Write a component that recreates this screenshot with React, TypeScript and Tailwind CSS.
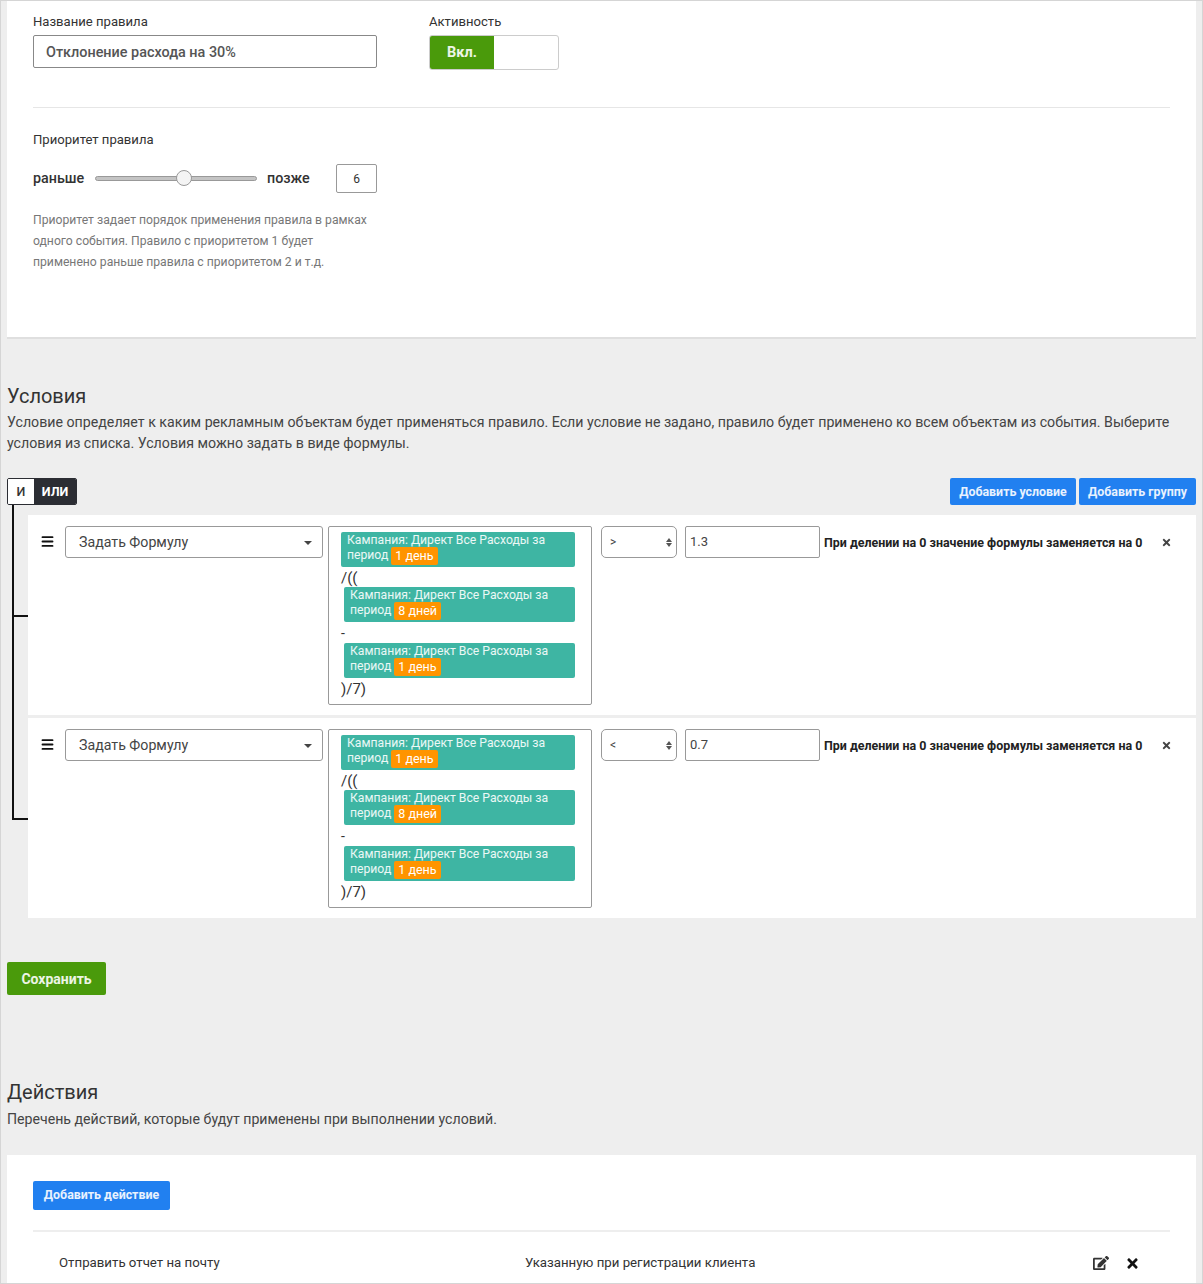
import { Menu } from "lucide-react";
import { FaEdit, FaTimes } from "react-icons/fa";

function Chip({ days, inset }: { days: string; inset?: boolean }) {
  return (
    <div className={`${inset ? "ml-[15px]" : "ml-[12px]"} mr-[16px] h-[35px] rounded-[2px] bg-[#3eb5a3] pl-[6px] pt-[1px] text-[12.2px] leading-[15px] text-white/90`}>
      <div className="h-[14px]">Кампания: Директ Все Расходы за</div>
      <div className="flex h-[18px] items-center">
        <span className="pb-[2px]">период</span>
        <span className="ml-[3px] flex h-[18px] items-center rounded-[2px] bg-[#ff9400] px-[4px] pb-[1px] text-[12.5px] text-white">{days}</span>
      </div>
    </div>
  );
}

function ConditionRow({ op, value }: { op: string; value: string }) {
  return (
    <div className="flex h-[200px] items-start bg-white pl-[12px] pt-[11px]">
      <Menu className="mt-[8px] mr-[10px] h-[15px] w-[15px] text-[#111]" strokeWidth={3} />
      <div className="flex h-[32px] w-[258px] items-center justify-between rounded-[3px] border border-[#999] pl-[13px] pr-[10px] pt-[1px] text-[14.2px] text-[#444]">
        Задать Формулу
        <span className="h-0 w-0 border-x-[4px] border-t-[4px] border-x-transparent border-t-[#444]" />
      </div>
      <div className="ml-[5px] h-[179px] w-[264px] rounded-[2px] border border-[#999] pt-[5px] text-[#333]">
        <Chip days="1 день" />
        <div className="ml-[12px] h-[20px] pt-[1px] text-[15px] leading-[20px]">/((</div>
        <Chip days="8 дней" inset />
        <div className="ml-[12px] h-[21px] pt-[1px] text-[14px] leading-[21px]">-</div>
        <Chip days="1 день" inset />
        <div className="ml-[12px] pt-[1px] text-[15px] leading-[20px]">)/7)</div>
      </div>
      <div className="ml-[9px] flex h-[32px] w-[76px] items-center justify-between rounded-[5px] border border-[#999] pl-[8px] pr-[4px] text-[12px] text-[#444]">
        {op}
        <span className="flex flex-col gap-[1px]">
          <span className="h-0 w-0 border-x-[3px] border-b-[4px] border-x-transparent border-b-[#555]" />
          <span className="h-0 w-0 border-x-[3px] border-t-[4px] border-x-transparent border-t-[#555]" />
        </span>
      </div>
      <div className="ml-[8px] flex h-[32px] w-[135px] items-center rounded-[2px] border border-[#999] pl-[4px] text-[13px] text-[#444]">{value}</div>
      <div className="ml-[4px] mt-[9px] w-[337px] text-[12.45px] leading-[16px] font-bold whitespace-nowrap text-[#222]">При делении на 0 значение формулы заменяется на 0</div>
      <FaTimes className="mt-[11px] h-[11px] w-[11px] text-[#444]" />
    </div>
  );
}

export default function App() {
  return (
    <div className="h-[1284px] w-[1203px] overflow-hidden border border-[#d5d5d5] bg-[#eeeeee] px-[6px] font-['Roboto',sans-serif]">
      {/* rule settings */}
      <div className="h-[338px] border-b-2 border-[#dfdfdf] bg-white px-[26px] pt-[13px]">
        <div className="flex">
          <div className="w-[344px]">
            <div className="h-[21px] text-[13.1px] leading-[15px] text-[#333]">Название правила</div>
            <div className="flex h-[33px] items-center rounded-[2px] border border-[#888] pl-[12px] pt-[2px] text-[14.4px] font-medium text-[#555]">Отклонение расхода на 30%</div>
          </div>
          <div className="ml-[52px]">
            <div className="h-[21px] text-[13.1px] leading-[15px] text-[#333]">Активность</div>
            <div className="flex h-[35px] w-[130px] overflow-hidden rounded-[3px] border border-[#ccc]">
              <div className="flex w-[64px] items-center justify-center bg-[#4a9a0b] text-[14.5px] font-bold text-white/90">Вкл.</div>
            </div>
          </div>
        </div>
        <div className="mt-[37px] w-[1137px] border-t border-[#e6e6e6]" />
        <div className="mt-[24px] text-[13.1px] leading-[15px] text-[#333]">Приоритет правила</div>
        <div className="mt-[17px] flex h-[29px] w-[344px] items-center text-[14.3px] font-medium text-[#333]">
          <span className="w-[62px]">раньше</span>
          <div className="relative h-[5px] w-[162px] rounded-full border border-[#999] bg-[#c4c4c4]">
            <div className="absolute top-[-7px] left-[80px] h-[16px] w-[16px] rounded-full border border-[#999] bg-[#f4f4f4]" />
          </div>
          <span className="ml-[10px] w-[69px]">позже</span>
          <div className="flex h-[29px] w-[41px] items-center justify-center rounded-[2px] border border-[#999] text-[12px] font-normal">6</div>
        </div>
        <div className="mt-[17px] text-[12.18px] leading-[21px] text-[#777]">
          Приоритет задает порядок применения правила в рамках
          <br />
          одного события. Правило с приоритетом 1 будет
          <br />
          применено раньше правила с приоритетом 2 и т.д.
        </div>
      </div>

      {/* conditions */}
      <div className="mt-[44px] text-[20px] leading-[26px] text-[#333]">Условия</div>
      <div className="mt-[3px] text-[14.2px] leading-[21px] text-[#444]">
        Условие определяет к каким рекламным объектам будет применяться правило. Если условие не задано, правило будет применено ко всем объектам из события. Выберите
        <br />
        условия из списка. Условия можно задать в виде формулы.
      </div>
      <div className="mt-[24px] flex h-[27px] items-start justify-between">
        <div className="flex h-[27px] w-[70px] overflow-hidden rounded-[2px] border border-[#2b2d33] text-[12.5px] font-bold">
          <div className="flex w-[26px] items-center justify-center bg-white pt-[1px] font-medium text-[#333]">И</div>
          <div className="flex flex-1 items-center justify-center bg-[#2b2d33] pt-[1px] text-white">ИЛИ</div>
        </div>
        <div className="flex gap-[3px]">
          <div className="flex h-[27px] w-[126px] items-center justify-center rounded-[2px] bg-[#2180f0] pt-[1px] text-[12.4px] font-bold text-white/90">Добавить условие</div>
          <div className="flex h-[27px] w-[117px] items-center justify-center rounded-[2px] bg-[#2180f0] pt-[1px] text-[12.4px] font-bold text-white/90">Добавить группу</div>
        </div>
      </div>
      <div className="relative mt-[10px] ml-[21px] flex flex-col gap-[3px]">
        <div className="absolute top-[-10px] left-[-16px] h-[314px] w-[2px] bg-[#111]" />
        <div className="absolute top-[100px] left-[-16px] h-[2px] w-[16px] bg-[#111]" />
        <div className="absolute top-[303px] left-[-16px] h-[2px] w-[16px] bg-[#111]" />
        <ConditionRow op=">" value="1.3" />
        <ConditionRow op="<" value="0.7" />
      </div>
      <div className="mt-[44px] flex h-[33px] w-[99px] items-center justify-center rounded-[2px] bg-[#4a9a0b] pt-[1px] text-[14px] font-bold text-white/90">Сохранить</div>

      {/* actions */}
      <div className="mt-[84px] text-[20px] leading-[26px] text-[#333]">Действия</div>
      <div className="mt-[4px] text-[14.15px] leading-[21px] text-[#444]">Перечень действий, которые будут применены при выполнении условий.</div>
      <div className="mt-[25px] h-[129px] bg-white px-[26px] pt-[26px]">
        <div className="flex h-[29px] w-[137px] items-center justify-center rounded-[2px] bg-[#2180f0] text-[12.4px] font-bold text-white/90">Добавить действие</div>
        <div className="mt-[20px] border-t-2 border-[#eeeeee]" />
        <div className="mt-[22px] flex h-[18px] items-center text-[13.25px] text-[#333]">
          <span className="ml-[26px] w-[466px]">Отправить отчет на почту</span>
          <span className="w-[568px]">Указанную при регистрации клиента</span>
          <FaEdit className="h-[16px] w-[16px] text-[#333]" />
          <FaTimes className="ml-[16px] h-[15px] w-[15px] text-[#111]" />
        </div>
      </div>
    </div>
  );
}
